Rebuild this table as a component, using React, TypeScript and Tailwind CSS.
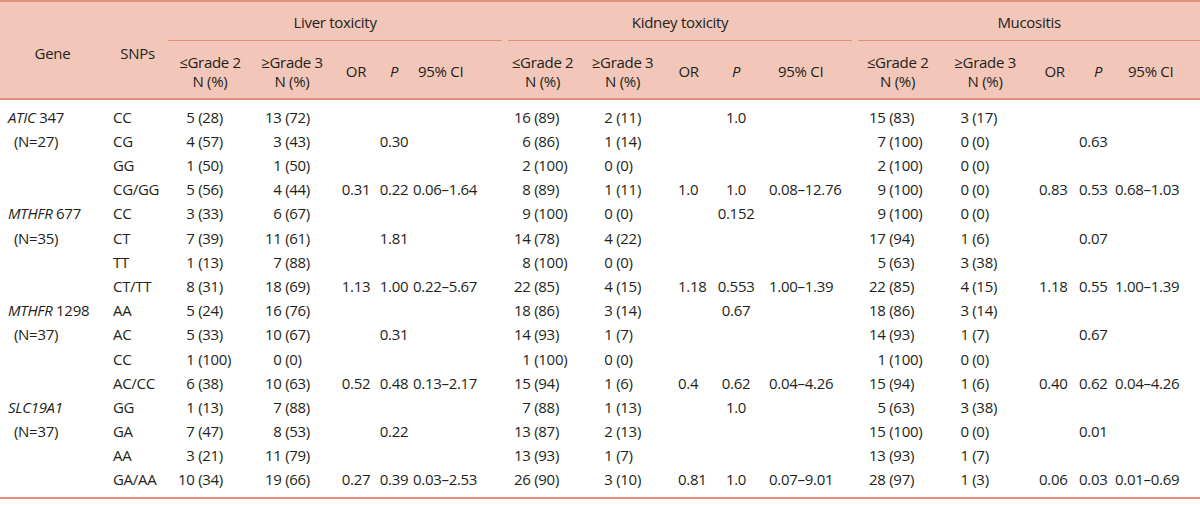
import React from 'react'

type Row = {
  gene?: React.ReactNode
  snp: string
  l: string[]
  k: string[]
  m: string[]
}

// each group: [<=G2, >=G3, OR, P, CI]
const rows: Row[] = [
  { gene: <><i>ATIC</i> 347</>, snp: 'CC', l: ['5 (28)', '13 (72)', '', '', ''], k: ['16 (89)', '2 (11)', '', '1.0', ''], m: ['15 (83)', '3 (17)', '', '', ''] },
  { gene: '(N=27)', snp: 'CG', l: ['4 (57)', '3 (43)', '', '0.30', ''], k: ['6 (86)', '1 (14)', '', '', ''], m: ['7 (100)', '0 (0)', '', '0.63', ''] },
  { snp: 'GG', l: ['1 (50)', '1 (50)', '', '', ''], k: ['2 (100)', '0 (0)', '', '', ''], m: ['2 (100)', '0 (0)', '', '', ''] },
  { snp: 'CG/GG', l: ['5 (56)', '4 (44)', '0.31', '0.22', '0.06–1.64'], k: ['8 (89)', '1 (11)', '1.0', '1.0', '0.08–12.76'], m: ['9 (100)', '0 (0)', '0.83', '0.53', '0.68–1.03'] },
  { gene: <><i>MTHFR</i> 677</>, snp: 'CC', l: ['3 (33)', '6 (67)', '', '', ''], k: ['9 (100)', '0 (0)', '', '0.152', ''], m: ['9 (100)', '0 (0)', '', '', ''] },
  { gene: '(N=35)', snp: 'CT', l: ['7 (39)', '11 (61)', '', '1.81', ''], k: ['14 (78)', '4 (22)', '', '', ''], m: ['17 (94)', '1 (6)', '', '0.07', ''] },
  { snp: 'TT', l: ['1 (13)', '7 (88)', '', '', ''], k: ['8 (100)', '0 (0)', '', '', ''], m: ['5 (63)', '3 (38)', '', '', ''] },
  { snp: 'CT/TT', l: ['8 (31)', '18 (69)', '1.13', '1.00', '0.22–5.67'], k: ['22 (85)', '4 (15)', '1.18', '0.553', '1.00–1.39'], m: ['22 (85)', '4 (15)', '1.18', '0.55', '1.00–1.39'] },
  { gene: <><i>MTHFR</i> 1298</>, snp: 'AA', l: ['5 (24)', '16 (76)', '', '', ''], k: ['18 (86)', '3 (14)', '', '0.67', ''], m: ['18 (86)', '3 (14)', '', '', ''] },
  { gene: '(N=37)', snp: 'AC', l: ['5 (33)', '10 (67)', '', '0.31', ''], k: ['14 (93)', '1 (7)', '', '', ''], m: ['14 (93)', '1 (7)', '', '0.67', ''] },
  { snp: 'CC', l: ['1 (100)', '0 (0)', '', '', ''], k: ['1 (100)', '0 (0)', '', '', ''], m: ['1 (100)', '0 (0)', '', '', ''] },
  { snp: 'AC/CC', l: ['6 (38)', '10 (63)', '0.52', '0.48', '0.13–2.17'], k: ['15 (94)', '1 (6)', '0.4', '0.62', '0.04–4.26'], m: ['15 (94)', '1 (6)', '0.40', '0.62', '0.04–4.26'] },
  { gene: <i>SLC19A1</i>, snp: 'GG', l: ['1 (13)', '7 (88)', '', '', ''], k: ['7 (88)', '1 (13)', '', '1.0', ''], m: ['5 (63)', '3 (38)', '', '', ''] },
  { gene: '(N=37)', snp: 'GA', l: ['7 (47)', '8 (53)', '', '0.22', ''], k: ['13 (87)', '2 (13)', '', '', ''], m: ['15 (100)', '0 (0)', '', '0.01', ''] },
  { snp: 'AA', l: ['3 (21)', '11 (79)', '', '', ''], k: ['13 (93)', '1 (7)', '', '', ''], m: ['13 (93)', '1 (7)', '', '', ''] },
  { snp: 'GA/AA', l: ['10 (34)', '19 (66)', '0.27', '0.39', '0.03–2.53'], k: ['26 (90)', '3 (10)', '0.81', '1.0', '0.07–9.01'], m: ['28 (97)', '1 (3)', '0.06', '0.03', '0.01–0.69'] },
]

const widths = [105, 65, 80, 84, 44, 32, 95, 75, 85, 47, 48, 95, 85, 90, 45, 35, 90]

// count with a hidden digit so single-digit values line up with two-digit ones
function Count({ v }: { v: string }) {
  if (!v) return null
  const single = /^\d\s/.test(v)
  return (
    <>
      {single && <span className="invisible">0</span>}
      {v}
    </>
  )
}

const valueCls = [
  // liver
  ['pl-[8px]', 'pl-[15px]', 'text-center', 'text-center', 'pl-[3px]'],
  // kidney
  ['pl-[9px]', 'pl-[16px]', 'pl-[13px]', 'text-center', 'pl-[9px]'],
  // mucositis
  ['pl-[14px]', 'pl-[12px]', 'pl-[9px]', 'pl-[4px]', 'pl-[5px]'],
]

function SubHead({ ci }: { ci: string[] }) {
  return (
    <>
      <th className="font-normal text-center align-middle leading-[19px] whitespace-nowrap pt-[4px]">
        ≤Grade 2<br />N (%)
      </th>
      <th className="font-normal text-center align-middle leading-[19px] whitespace-nowrap pt-[4px]">
        ≥Grade 3<br />N (%)
      </th>
      <th className={`font-normal align-middle pt-[4px] ${ci[0]}`}>OR</th>
      <th className={`font-normal align-middle pt-[4px] ${ci[1]}`}>
        <i>P</i>
      </th>
      <th className={`font-normal align-middle text-left whitespace-nowrap pt-[4px] ${ci[2]}`}>95% CI</th>
    </>
  )
}

export default function App() {
  return (
    <div className="w-[1200px] h-[506px] bg-white">
      <table className="w-[1200px] table-fixed border-collapse text-[#231f20] font-['Open_Sans','Lato',sans-serif] text-[15px] tracking-[-0.3px]">
        <colgroup>
          {widths.map((w, i) => (
            <col key={i} style={{ width: w }} />
          ))}
        </colgroup>
        <thead className="bg-[#f2c6b9]">
          <tr className="h-[40px] border-t-2 border-[#e2907a]">
            <th rowSpan={2} className="font-normal text-center align-middle pt-[6px]">Gene</th>
            <th rowSpan={2} className="font-normal text-center align-middle pt-[6px]">SNPs</th>
            <th colSpan={5} className="font-normal align-bottom px-0">
              <div className="pb-[7px] ml-[-2px] mr-[3px] border-b border-[#e2907a]">Liver toxicity</div>
            </th>
            <th colSpan={5} className="font-normal align-bottom px-0">
              <div className="pb-[7px] mx-[3px] border-b border-[#e2907a]">Kidney toxicity</div>
            </th>
            <th colSpan={5} className="font-normal align-bottom px-0">
              <div className="pb-[7px] ml-[3px] border-b border-[#e2907a]">Mucositis</div>
            </th>
          </tr>
          <tr className="h-[58px] border-b-2 border-[#e2907a]">
            <SubHead ci={['text-center', 'text-center', 'pl-[8px]']} />
            <SubHead ci={['text-center', 'text-center', 'pl-[18px]']} />
            <SubHead ci={['text-center pl-[4px]', 'text-left pl-[19px]', 'pl-[18px]']} />
          </tr>
        </thead>
        <tbody>
          {rows.map((r, i) => {
            const pad = i === 0 ? 'pt-[6px]' : i === rows.length - 1 ? 'pb-[6px]' : ''
            const h = i === 0 ? 'h-[30px]' : i === rows.length - 1 ? 'h-[30px]' : 'h-[24.2px]'
            const isN = typeof r.gene === 'string'
            return (
              <tr key={i} className={`${h} ${i === rows.length - 1 ? 'border-b-2 border-[#e2907a]' : ''}`}>
                <td className={`${pad} whitespace-nowrap ${isN ? 'pl-[14px]' : 'pl-[8px]'}`}>{r.gene}</td>
                <td className={`${pad} pl-[8px]`}>{r.snp}</td>
                {[r.l, r.k, r.m].map((g, gi) =>
                  g.map((v, vi) => (
                    <td key={`${gi}-${vi}`} className={`${pad} whitespace-nowrap ${valueCls[gi][vi]}`}>
                      {vi < 2 ? <Count v={v} /> : v}
                    </td>
                  ))
                )}
              </tr>
            )
          })}
        </tbody>
      </table>
    </div>
  )
}
